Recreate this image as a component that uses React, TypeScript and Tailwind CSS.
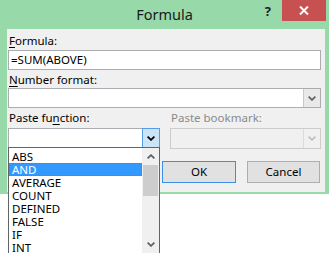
import React from 'react';

const functions = ['ABS', 'AND', 'AVERAGE', 'COUNT', 'DEFINED', 'FALSE', 'IF', 'INT'];

const Chevron = ({ up = false, color = '#000' }: { up?: boolean; color?: string }) => (
  <svg width="8" height="5" viewBox="0 0 8 5">
    <path
      d={up ? 'M0.6 4.4 L4 1.1 L7.4 4.4' : 'M0.6 0.6 L4 3.9 L7.4 0.6'}
      fill="none"
      stroke={color}
      strokeWidth="1.7"
    />
  </svg>
);

const FormulaDialog = () => {
  return (
    <div className="relative h-[253px] w-[331px] overflow-hidden bg-white font-['Noto_Sans',sans-serif] text-[11.5px] text-black">
      <div className="flex h-[194px] w-[329px] flex-col bg-[#97d9a9]">
        {/* Title bar */}
        <div className="grid h-[29px] grid-cols-[1fr_auto_1fr]">
          <div />
          <div className="pt-[4px] text-[14.5px] leading-[20px] text-[#1a1a1a]">Formula</div>
          <div className="flex items-start justify-end pr-[3px]">
            <span className="mr-[11px] pt-[3px] text-[13px] font-bold leading-[16px] text-[#222]">?</span>
            <button className="flex h-[21px] w-[44px] items-center justify-center bg-[#c75050]">
              <svg width="10" height="9" viewBox="0 0 10 9">
                <path d="M1 0.5 L9 8.5 M9 0.5 L1 8.5" stroke="#fff" strokeWidth="2" />
              </svg>
            </button>
          </div>
        </div>

        {/* Client area */}
        <div className="flex flex-1 pb-[2px] pl-[7px] pr-[4px]">
          <div className="flex-1 bg-[#f0f0f0] pt-[4px]">
            <div className="h-[16px] pl-[2px] leading-[16px]">
              <span className="underline underline-offset-2">F</span>ormula:
            </div>
            <div className="ml-[1px] mt-[1px] flex h-[20px] w-[313px] items-center border border-[#abadb3] bg-white px-[2px]">
              =SUM(ABOVE)
            </div>

            <div className="mt-[2px] h-[16px] pl-[2px] leading-[16px]">
              <span className="underline underline-offset-2">N</span>umber format:
            </div>
            <div className="ml-[1px] flex h-[20px] w-[313px] border border-[#abadb3] bg-white">
              <div className="flex-1" />
              <div className="flex w-[17px] items-center justify-center border-l border-[#c9c9c9] bg-[#e9e9e9]">
                <Chevron color="#606060" />
              </div>
            </div>

            <div className="ml-[1px] mt-[2px] flex gap-[10px]">
              {/* Paste function */}
              <div className="w-[152px]">
                <div className="h-[16px] pl-[1px] leading-[16px]">
                  Paste fu<span className="underline underline-offset-2">n</span>ction:
                </div>
                <div className="relative mt-[2px] flex h-[20px] border border-[#abadb3] bg-white">
                  <div className="flex-1" />
                  <div className="-my-px -mr-px flex w-[18px] items-center justify-center border border-[#569de5] bg-[#cce4f7]">
                    <Chevron />
                  </div>

                  {/* Drop-down list */}
                  <div className="absolute left-[-1px] top-full z-10 flex h-[107px] w-[152px] border border-[#646464] bg-white">
                    <div className="flex-1 pt-[2px]">
                      {functions.map((f) => (
                        <div
                          key={f}
                          className={
                            f === 'AND'
                              ? 'h-[13px] border border-dotted border-[#cc6600] bg-[#3399ff] pl-[2px] leading-[11px] text-white'
                              : 'h-[13px] pl-[3px] leading-[13px]'
                          }
                        >
                          {f}
                        </div>
                      ))}
                    </div>
                    <div className="flex w-[17px] flex-col bg-[#f0f0f0]">
                      <div className="flex h-[17px] items-center justify-center">
                        <Chevron up color="#606060" />
                      </div>
                      <div className="mx-px h-[31px] bg-[#cdcdcd]" />
                      <div className="flex-1" />
                      <div className="flex h-[17px] items-center justify-center">
                        <Chevron color="#606060" />
                      </div>
                    </div>
                  </div>
                </div>
              </div>

              {/* Paste bookmark */}
              <div className="w-[151px]">
                <div className="h-[16px] pl-[1px] leading-[16px] text-[#8a8a8a]">Paste bookmark:</div>
                <div className="mt-[2px] flex h-[21px] border border-[#cccccc] bg-[#f0f0f0]">
                  <div className="flex-1" />
                  <div className="flex w-[17px] items-center justify-center border-l border-[#dcdcdc]">
                    <Chevron color="#bfbfbf" />
                  </div>
                </div>
              </div>
            </div>

            {/* Buttons */}
            <div className="mt-[12px] flex justify-end gap-[11px] pr-[5px]">
              <button className="h-[22px] w-[74px] border border-[#3c8ee6] bg-[#e1e1e1] leading-[20px]">OK</button>
              <button className="h-[22px] w-[73px] border border-[#adadad] bg-[#e1e1e1] leading-[20px]">Cancel</button>
            </div>
          </div>
        </div>
      </div>
    </div>
  );
};

export default function App() {
  return <FormulaDialog />;
}
